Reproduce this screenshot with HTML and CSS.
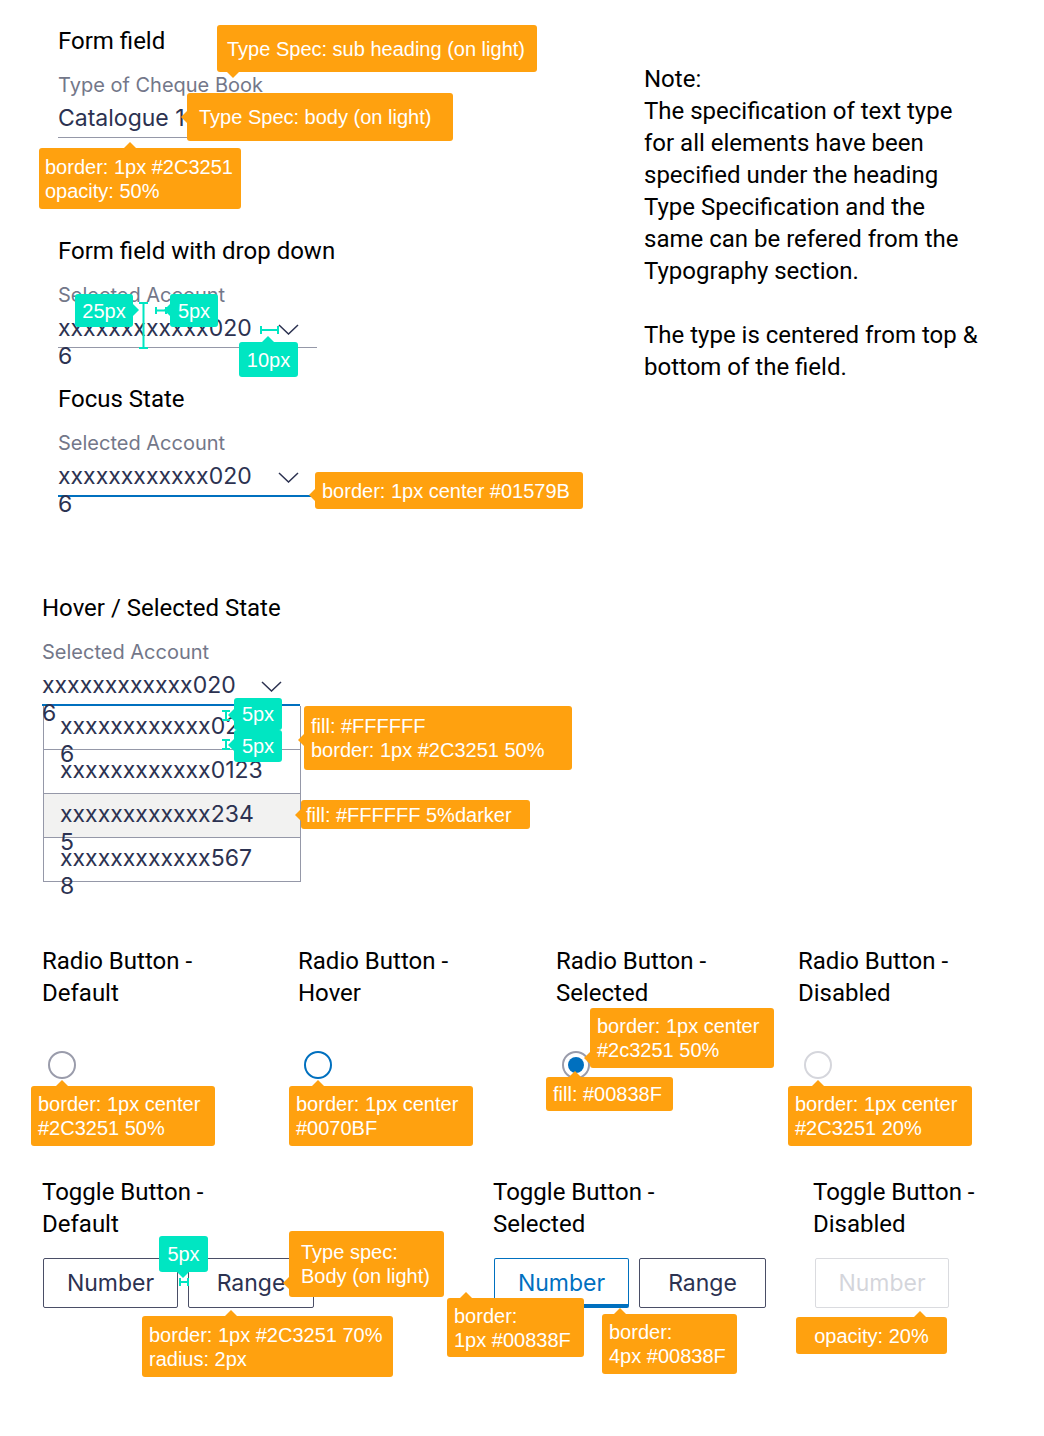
FILE: index.html
```html
<!DOCTYPE html>
<html lang="en">
<head>
<meta charset="utf-8">
<title>Form field spec</title>
<link rel="stylesheet" href="styles.css">
</head>
<body>
<div class="page">

  <section class="top">
    <div class="left">
      <div class="block">
        <h2 class="h">Form field</h2>
        <div class="label">Type of Cheque Book</div>
        <div class="field"><span class="val">Catalogue 1</span></div>
      </div>

      <div class="block b2">
        <h2 class="h">Form field with drop down</h2>
        <div class="label">Selected Account</div>
        <div class="field">
          <span class="val">xxxxxxxxxxxx020<br>6</span>
          <svg class="chev" width="21" height="11" viewBox="0 0 21 11"><path d="M1 1 L10.5 10 L20 1" fill="none" stroke="#2C3251" stroke-width="1.5"/></svg>
        </div>
      </div>

      <div class="block b3">
        <h2 class="h">Focus State</h2>
        <div class="label">Selected Account</div>
        <div class="field focus">
          <span class="val">xxxxxxxxxxxx020<br>6</span>
          <svg class="chev" width="21" height="11" viewBox="0 0 21 11"><path d="M1 1 L10.5 10 L20 1" fill="none" stroke="#2C3251" stroke-width="1.5"/></svg>
        </div>
      </div>
    </div>

    <p class="note">Note:<br>The specification of text type<br>for all elements have been<br>specified under the heading<br>Type Specification and the<br>same can be refered from the<br>Typography section.<br><br>The type is centered from top &amp;<br>bottom of the field.</p>
  </section>

  <section class="hover">
    <h2 class="h">Hover / Selected State</h2>
    <div class="label">Selected Account</div>
    <div class="field focus wide">
      <span class="val">xxxxxxxxxxxx020<br>6</span>
      <svg class="chev" width="21" height="11" viewBox="0 0 21 11"><path d="M1 1 L10.5 10 L20 1" fill="none" stroke="#2C3251" stroke-width="1.5"/></svg>
    </div>
    <div class="list">
      <div class="item">xxxxxxxxxxxx020<br>6</div>
      <div class="item">xxxxxxxxxxxx0123</div>
      <div class="item dark">xxxxxxxxxxxx234<br>5</div>
      <div class="item">xxxxxxxxxxxx567<br>8</div>
    </div>
  </section>

  <section class="radios">
    <div class="rcol">
      <h2 class="h">Radio Button -<br>Default</h2>
      <div class="radio"></div>
    </div>
    <div class="rcol">
      <h2 class="h">Radio Button -<br>Hover</h2>
      <div class="radio hov"></div>
    </div>
    <div class="rcol">
      <h2 class="h">Radio Button -<br>Selected</h2>
      <div class="radio sel"><span class="dot"></span></div>
    </div>
    <div class="rcol">
      <h2 class="h">Radio Button -<br>Disabled</h2>
      <div class="radio dis"></div>
    </div>
  </section>

  <section class="toggles">
    <div class="tcol">
      <h2 class="h">Toggle Button -<br>Default</h2>
      <div class="btns">
        <div class="tbtn w-num">Number</div>
        <div class="tbtn w-rng">Range</div>
      </div>
    </div>
    <div class="tcol">
      <h2 class="h">Toggle Button -<br>Selected</h2>
      <div class="btns">
        <div class="tbtn w-num on">Number</div>
        <div class="tbtn w-rng2">Range</div>
      </div>
    </div>
    <div class="tcol">
      <h2 class="h">Toggle Button -<br>Disabled</h2>
      <div class="btns">
        <div class="tbtn w-dis off">Number</div>
      </div>
    </div>
  </section>

  <!-- annotations -->
  <div class="tip t1 pt-down">Type Spec: sub heading (on light)</div>
  <div class="tip t2 pt-left">Type Spec: body (on light)</div>
  <div class="tip t3 pt-up"><span>border: 1px #2C3251</span><span>opacity: 50%</span></div>

  <svg class="measure m1" width="11" height="47" viewBox="0 0 11 47"><path d="M1 1H10 M5.5 1V46 M1 46H10" fill="none" stroke="#00E6C2" stroke-width="2"/></svg>
  <svg class="measure m2" width="12" height="9" viewBox="0 0 12 9"><path d="M1 1V8 M1 4.5H11 M11 1V8" fill="none" stroke="#00E6C2" stroke-width="2"/></svg>
  <svg class="measure m3" width="19" height="10" viewBox="0 0 19 10"><path d="M1 1V9 M1 5H18 M18 1V9" fill="none" stroke="#00E6C2" stroke-width="2"/></svg>
  <div class="tip teal t4 pt-right">25px</div>
  <div class="tip teal t5 pt-left">5px</div>
  <div class="tip teal t6 pt-up">10px</div>

  <div class="tip t7 pt-left">border: 1px center #01579B</div>

  <svg class="measure m4" width="10" height="11" viewBox="0 0 10 11"><path d="M1 1H9 M5 1V10 M1 10H9" fill="none" stroke="#00E6C2" stroke-width="2"/></svg>
  <svg class="measure m5" width="10" height="11" viewBox="0 0 10 11"><path d="M1 1H9 M5 1V10 M1 10H9" fill="none" stroke="#00E6C2" stroke-width="2"/></svg>
  <div class="tip teal t8 pt-left">5px</div>
  <div class="tip teal t9 pt-left">5px</div>
  <div class="tip t10 pt-left"><span>fill: #FFFFFF</span><span>border: 1px #2C3251 50%</span></div>
  <div class="tip t11 pt-left">fill: #FFFFFF 5%darker</div>

  <div class="tip t12 pt-up"><span>border: 1px center</span><span>#2C3251 50%</span></div>
  <div class="tip t13 pt-up"><span>border: 1px center</span><span>#0070BF</span></div>
  <div class="tip t14 pt-left"><span>border: 1px center</span><span>#2c3251 50%</span></div>
  <div class="tip t15 pt-up">fill: #00838F</div>
  <div class="tip t16 pt-up"><span>border: 1px center</span><span>#2C3251 20%</span></div>

  <svg class="measure m6" width="10" height="10" viewBox="0 0 10 10"><path d="M1 1V9 M1 5H9 M9 1V9" fill="none" stroke="#00E6C2" stroke-width="2"/></svg>
  <div class="tip teal t17 pt-down">5px</div>
  <div class="tip t18 pt-left"><span>Type spec:</span><span>Body (on light)</span></div>
  <div class="tip t19 pt-up"><span>border: 1px #2C3251 70%</span><span>radius: 2px</span></div>
  <div class="tip t20 pt-up"><span>border:</span><span>1px #00838F</span></div>
  <div class="tip t21 pt-up"><span>border:</span><span>4px #00838F</span></div>
  <div class="tip t22 pt-up">opacity: 20%</div>
</div>
</body>
</html>
```

FILE: styles.css
```css
* { box-sizing: border-box; }

body {
  margin: 0;
  background: #ffffff;
  font-family: Roboto, "Liberation Sans", sans-serif;
  color: #000000;
}

.page {
  position: relative;
  width: 1044px;
  min-height: 1436px;
  padding-top: 25px;
}

/* ---------- text styles ---------- */
.h {
  margin: 0;
  font-size: 24px;
  line-height: 32px;
  font-weight: 400;
  color: #000;
}

.label {
  margin-top: 16px;
  font-family: Inter, "Noto Sans", sans-serif;
  font-size: 20px;
  line-height: 24px;
  color: #737789;
}

.field {
  display: flex;
  justify-content: space-between;
  align-items: flex-start;
  width: 259px;
  height: 34px;
  margin-top: 7px;
  border-bottom: 1px solid #9598a8;
  font-family: Inter, "Noto Sans", sans-serif;
  font-size: 23px;
  line-height: 28px;
  color: #2C3251;
}
.field .val { white-space: nowrap; }
.field.focus {
  height: 35px;
  border-bottom: 2px solid #0070BF;
}
.field.wide { width: 258px; }

.chev {
  display: block;
  margin-top: 10px;
  margin-right: 18px;
  flex: none;
}

/* ---------- top area ---------- */
.top {
  display: grid;
  grid-template-columns: 644px 1fr;
}
.left { padding-left: 58px; }
.b2 { margin-top: 97px; }
.b3 { margin-top: 35px; }

.note {
  margin: 0;
  padding-top: 38px;
  font-size: 24px;
  line-height: 32px;
  color: #000;
}

/* ---------- hover / dropdown list ---------- */
.hover {
  padding-left: 42px;
  margin-top: 95px;
}

.list {
  width: 258px;
  margin-left: 1px;
  border: 1px solid #9598a8;
  border-top: 0;
  background: #fff;
  font-family: Inter, "Noto Sans", sans-serif;
  font-size: 23px;
  line-height: 28px;
  color: #2C3251;
}
.item {
  height: 44px;
  padding: 6px 0 0 16px;
  border-top: 1px solid #9598a8;
  white-space: nowrap;
}
.item:first-child {
  height: 43px;
  border-top: 0;
}
.item.dark { background: #f2f2f1; }

/* ---------- radios ---------- */
.radios {
  display: grid;
  grid-template-columns: 256px 258px 242px 1fr;
  padding-left: 42px;
  margin-top: 63px;
}
.radio {
  width: 28px;
  height: 28px;
  margin: 42px 0 0 6px;
  border: 2px solid #9a9cab;
  border-radius: 50%;
  display: flex;
  align-items: center;
  justify-content: center;
}
.radio.hov { border-color: #0070BF; }
.radio.dis { border-color: #d5d6dc; }
.radio .dot {
  width: 16px;
  height: 16px;
  border-radius: 50%;
  background: #0070BF;
}

/* ---------- toggles ---------- */
.toggles {
  display: grid;
  grid-template-columns: 451px 320px 1fr;
  padding-left: 42px;
  margin-top: 97px;
}
.btns {
  display: flex;
  gap: 10px;
  margin-top: 18px;
  padding-left: 1px;
}
.tbtn {
  height: 50px;
  display: flex;
  align-items: center;
  justify-content: center;
  border: 1px solid #4a4e66;
  border-radius: 2px;
  font-family: Inter, "Noto Sans", sans-serif;
  font-size: 23px;
  color: #2C3251;
}
.w-num { width: 135px; }
.w-rng { width: 126px; }
.w-rng2 { width: 127px; }
.w-dis { width: 134px; margin-left: 1px; }
.tbtn.on {
  color: #0070BF;
  border-color: #0070BF;
  border-bottom-width: 4px;
  padding-top: 3px;
}
.tbtn.off { opacity: 0.2; }

/* ---------- annotations ---------- */
.tip {
  --c: #FFA10F;
  position: absolute;
  display: flex;
  flex-direction: column;
  justify-content: center;
  padding: 0 7px;
  background: var(--c);
  color: #fff;
  border-radius: 3px;
  font-family: "Liberation Sans", Arial, sans-serif;
  font-size: 20px;
  line-height: 24px;
  white-space: nowrap;
}
.tip::before {
  content: "";
  position: absolute;
  width: 0;
  height: 0;
  border: 6px solid transparent;
}
.pt-up::before { bottom: 100%; border-top-width: 0; border-bottom-color: var(--c); margin-left: -6px; }
.pt-down::before { top: 100%; border-bottom-width: 0; border-top-color: var(--c); margin-left: -6px; }
.pt-left::before { right: 100%; border-left-width: 0; border-right-color: var(--c); margin-top: -6px; }
.pt-right::before { left: 100%; border-right-width: 0; border-left-color: var(--c); margin-top: -6px; }

.teal {
  --c: #00E6C2;
  align-items: center;
  padding: 0;
}

.measure { position: absolute; display: block; }
.m1 { left: 138px; top: 302px; }
.m2 { left: 155px; top: 306px; }
.m3 { left: 260px; top: 325px; }
.m4 { left: 221px; top: 710px; }
.m5 { left: 221px; top: 739px; }
.m6 { left: 179px; top: 1277px; }

.t1 { left: 217px; top: 25px; width: 320px; height: 47px; padding-left: 10px; }
.t1::before { left: 16px; }
.t2 { left: 187px; top: 93px; width: 266px; height: 48px; padding-left: 12px; }
.t2::before { top: 24px; }
.t3 { left: 39px; top: 148px; width: 202px; height: 61px; padding-left: 6px; }
.t3::before { left: 91px; }

.t4 { left: 75px; top: 294px; width: 58px; height: 33px; }
.t4::before { top: 16px; }
.t5 { left: 170px; top: 294px; width: 48px; height: 33px; }
.t5::before { top: 16px; }
.t6 { left: 239px; top: 342px; width: 59px; height: 35px; }
.t6::before { left: 29px; }

.t7 { left: 315px; top: 472px; width: 268px; height: 37px; }
.t7::before { top: 23px; }

.t8 { left: 234px; top: 698px; width: 48px; height: 32px; }
.t8::before { top: 17px; }
.t9 { left: 234px; top: 730px; width: 48px; height: 32px; }
.t9::before { top: 15px; }
.t10 { left: 304px; top: 706px; width: 268px; height: 64px; }
.t10::before { top: 34px; }
.t11 { left: 301px; top: 800px; width: 229px; height: 29px; padding-left: 5px; }
.t11::before { top: 15px; }

.t12 { left: 31px; top: 1086px; width: 184px; height: 60px; }
.t12::before { left: 31px; }
.t13 { left: 289px; top: 1086px; width: 184px; height: 60px; }
.t13::before { left: 29px; }
.t14 { left: 590px; top: 1008px; width: 184px; height: 60px; }
.t14::before { top: 50px; }
.t15 { left: 546px; top: 1077px; width: 127px; height: 34px; }
.t15::before { left: 29px; }
.t16 { left: 788px; top: 1086px; width: 184px; height: 60px; }
.t16::before { left: 30px; }

.t17 { left: 159px; top: 1236px; width: 49px; height: 36px; }
.t17::before { left: 24px; }
.t18 { left: 289px; top: 1231px; width: 155px; height: 66px; padding-left: 12px; }
.t18::before { top: 52px; }
.t19 { left: 142px; top: 1316px; width: 251px; height: 61px; }
.t19::before { left: 89px; }
.t20 { left: 447px; top: 1298px; width: 137px; height: 59px; }
.t20::before { left: 19px; }
.t21 { left: 602px; top: 1314px; width: 135px; height: 60px; }
.t21::before { left: 18px; }
.t22 { left: 796px; top: 1317px; width: 151px; height: 37px; align-items: center; }
.t22::before { left: 124px; }
```
